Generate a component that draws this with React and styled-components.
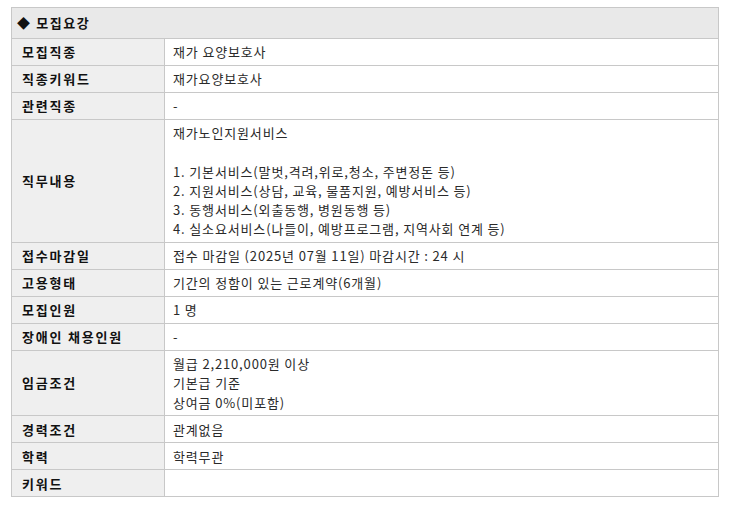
import React from "react";
import styled, { createGlobalStyle } from "styled-components";

const Global = createGlobalStyle`
  html, body { margin: 0; padding: 0; background: #fff; }
  body { font-family: "Noto Sans CJK KR", "Noto Sans", sans-serif; }
`;

const Wrapper = styled.div`
  padding: 7px 11px 0 11px;
`;

const Table = styled.table`
  width: 100%;
  border-collapse: collapse;
  table-layout: fixed;
  border: 1px solid #c8c8c8;
  font-size: 13px;
`;

const LabelCol = styled.col`
  width: 153px;
`;

const HeaderCell = styled.th`
  background: #e9e9e9;
  border: 1px solid #c8c8c8;
  text-align: left;
  font-weight: 700;
  color: #111;
  padding: 5px 5px;
  line-height: 20px;
  letter-spacing: 1.6px;
`;

const Label = styled.th`
  background: #efefef;
  border: 1px solid #c8c8c8;
  text-align: left;
  font-weight: 700;
  color: #111;
  padding: 3.4px 10px;
  line-height: 19.2px;
  letter-spacing: 1.8px;
  vertical-align: middle;
`;

const Value = styled.td`
  background: #fff;
  border: 1px solid #c8c8c8;
  color: #2a2a2a;
  padding: 3.4px 8px;
  line-height: 19.2px;
  letter-spacing: 0.85px;
  vertical-align: middle;
`;

const rows = [
  ["모집직종", ["재가 요양보호사"]],
  ["직종키워드", ["재가요양보호사"]],
  ["관련직종", ["-"]],
  [
    "직무내용",
    [
      "재가노인지원서비스",
      "",
      "1. 기본서비스(말벗,격려,위로,청소, 주변정돈 등)",
      "2. 지원서비스(상담, 교육, 물품지원, 예방서비스 등)",
      "3. 동행서비스(외출동행, 병원동행 등)",
      "4. 실소요서비스(나들이, 예방프로그램, 지역사회 연계 등)",
    ],
  ],
  ["접수마감일", ["접수 마감일 (2025년 07월 11일) 마감시간 : 24 시"]],
  ["고용형태", ["기간의 정함이 있는 근로계약(6개월)"]],
  ["모집인원", ["1 명"]],
  ["장애인 채용인원", ["-"]],
  ["임금조건", ["월급 2,210,000원 이상", "기본급 기준", "상여금 0%(미포함)"]],
  ["경력조건", ["관계없음"]],
  ["학력", ["학력무관"]],
  ["키워드", [""]],
];

export default function App() {
  return (
    <Wrapper>
      <Global />
      <Table>
        <colgroup>
          <LabelCol />
          <col />
        </colgroup>
        <tbody>
          <tr>
            <HeaderCell colSpan={2}>◆ 모집요강</HeaderCell>
          </tr>
          {rows.map(([label, lines]) => (
            <tr key={label}>
              <Label>{label}</Label>
              <Value>
                {lines.map((l, i) => (
                  <React.Fragment key={i}>
                    {i > 0 && <br />}
                    {l === "" ? "\u00a0" : l}
                  </React.Fragment>
                ))}
              </Value>
            </tr>
          ))}
        </tbody>
      </Table>
    </Wrapper>
  );
}
